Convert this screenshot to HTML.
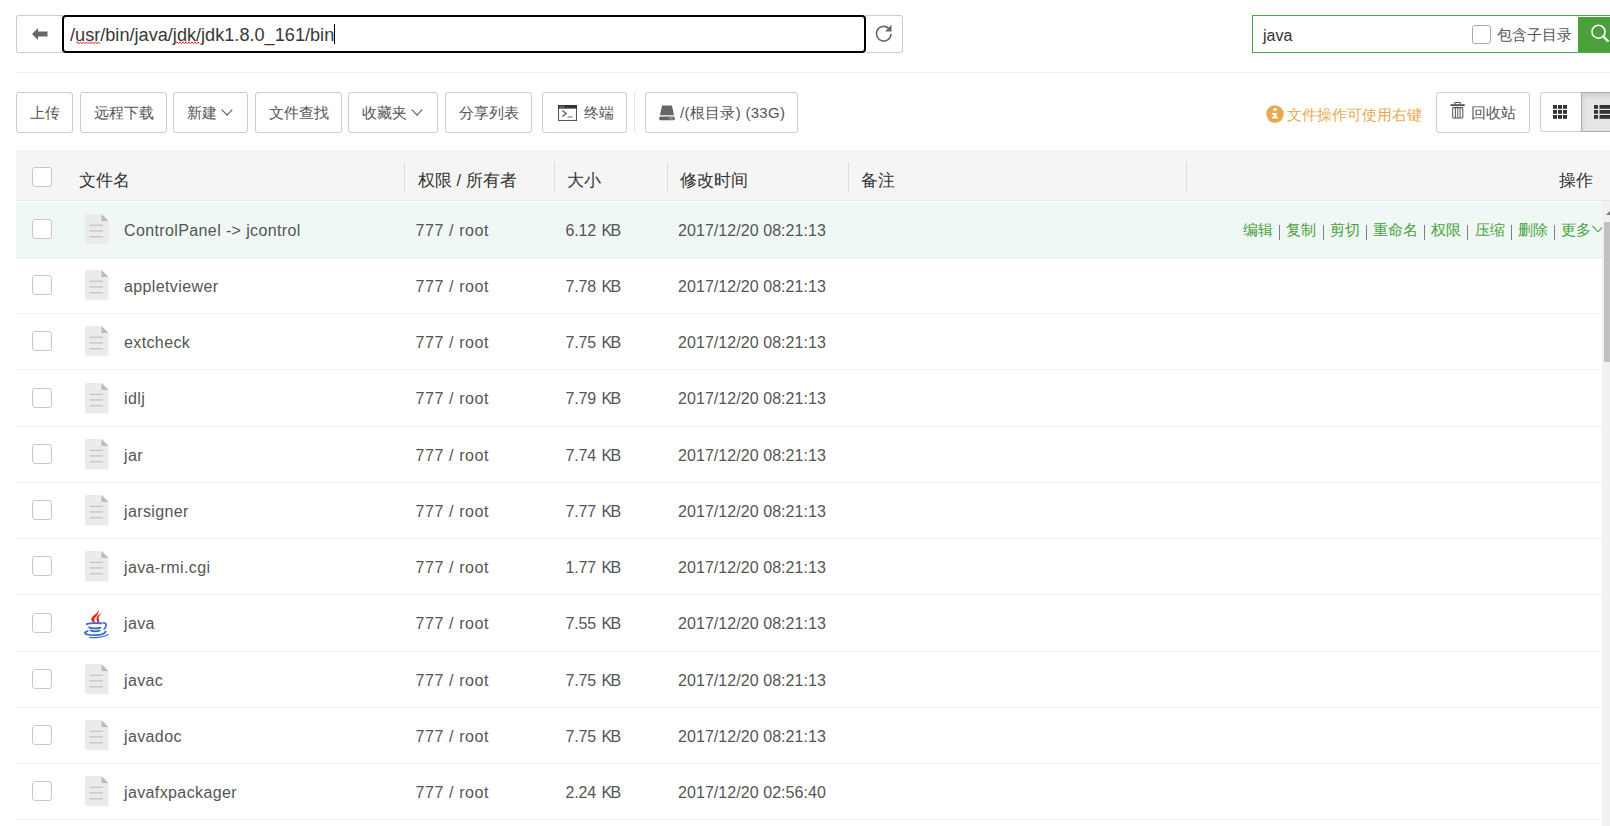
<!DOCTYPE html>
<html><head><meta charset="utf-8">
<style>
*{box-sizing:border-box;margin:0;padding:0}
html,body{width:1610px;height:826px;overflow:hidden;background:#fff}
body{position:relative;font-family:"Liberation Sans",sans-serif;color:#555}
.abs{position:absolute}
.btn{position:absolute;top:92px;height:41px;border:1px solid #ccc;border-radius:3px;background:#fff;font-size:15px;color:#555;line-height:39px;white-space:nowrap}
.btn span{position:absolute;top:0}
.chev{display:inline-block;width:8px;height:8px;border-right:1.7px solid #555;border-bottom:1.7px solid #555;transform:rotate(45deg)}
.hdr{position:absolute;top:150px;left:16px;width:1594px;height:51px;background:#f5f5f5;border-bottom:1px solid #e8e8e8}
.hdr .t{position:absolute;top:5px;line-height:50px;font-size:16.5px;color:#333;white-space:nowrap}
.hdr .sep{position:absolute;top:11.5px;width:1px;height:30px;background:#ddd}
.cb{position:absolute;width:20px;height:20px;border:1px solid #c8c8c8;border-radius:3px;background:#fff}
.row{position:absolute;left:16px;width:1586.5px;height:56.25px;border-bottom:1px solid #f0f0f0}
.row .t{position:absolute;top:1px;line-height:56px;font-size:16px;color:#555;white-space:nowrap}
.act{display:flex;align-items:center;height:56px;top:0!important;color:#4aa13c!important;font-size:15px!important}
.act span{display:block;line-height:20px;margin-top:1px}
.asep{display:block;width:1px;height:15px;background:#808080;margin:5px 6.15px 0 6.15px}
</style></head><body>

<!-- top bar -->
<div class="abs" style="left:16px;top:15px;width:47px;height:38px;border:1px solid #ccc;border-right:none;border-radius:3px 0 0 3px"></div>
<svg class="abs" style="left:32px;top:28px" width="16" height="12" viewBox="0 0 16 12"><path d="M0 6 L6 0 V3.5 H15.5 V8.5 H6 V12 Z" fill="#666"/></svg>
<div class="abs" style="left:62px;top:15px;width:804px;height:38px;border:2px solid #000;border-radius:4px;background:#fff"></div>
<div class="abs" style="left:70px;top:16px;line-height:38px;font-size:18.15px;color:#383838;white-space:nowrap">/usr/bin/java/jdk/jdk1.8.0_161/bin</div>
<div id="caret" class="abs" style="left:334px;top:24px;width:1px;height:20px;background:#000"></div>
<svg class="abs" style="left:75px;top:41.2px" width="130" height="4" viewBox="0 0 130 4"><path d="M1 2 L2.5 0.8 L4.0 2.8 L5.5 0.8 L7.0 2.8 L8.5 0.8 L10.0 2.8 L11.5 0.8 L13.0 2.8 L14.5 0.8 L16.0 2.8 L17.5 0.8 L19.0 2.8 L20.5 0.8 L22.0 2.8 L23.5 0.8 L25.0 2.8" fill="none" stroke="#e33" stroke-width="1"/><path d="M100.5 2 L102.0 0.8 L103.5 2.8 L105.0 0.8 L106.5 2.8 L108.0 0.8 L109.5 2.8 L111.0 0.8 L112.5 2.8 L114.0 0.8 L115.5 2.8 L117.0 0.8 L118.5 2.8 L120.0 0.8 L121.5 2.8 L123.0 0.8 L124.5 2.8" fill="none" stroke="#e33" stroke-width="1"/></svg>
<div class="abs" style="left:866px;top:15px;width:37px;height:38px;border:1px solid #ccc;border-left:none;border-radius:0 3px 3px 0"></div>
<svg class="abs" style="left:874px;top:23px" width="20" height="21" viewBox="0 0 20 21"><path d="M17 11 A7.3 7.3 0 1 1 14.6 5.3" fill="none" stroke="#666" stroke-width="1.6"/><path d="M17.5 1.8 V8.4 H11 Z" fill="#666"/></svg>

<div class="abs" style="left:1252px;top:15px;width:400px;height:38px;border:1px solid #4ca64c"></div>
<div class="abs" style="left:1263px;top:16.5px;line-height:38px;font-size:16px;color:#333">java</div>
<div class="cb" style="left:1472px;top:25px;width:19px;height:19px;border-color:#aaa"></div>
<div class="abs" style="left:1497px;top:16px;line-height:38px;font-size:15.2px;color:#555">包含子目录</div>
<div class="abs" style="left:1578px;top:17px;width:40px;height:35px;background:#4aa13c"></div>
<svg class="abs" style="left:1590px;top:23px" width="20" height="20" viewBox="0 0 20 20"><circle cx="8.5" cy="8.7" r="6.5" fill="none" stroke="#fff" stroke-width="1.6"/><path d="M13.2 13.4 L17.8 18" stroke="#fff" stroke-width="2.3" stroke-linecap="round"/></svg>

<div class="abs" style="left:16px;top:72px;width:1594px;height:1px;background:#eee"></div>

<!-- toolbar -->
<div class="btn" style="left:16px;width:57px"><span style="left:13px">上传</span></div>
<div class="btn" style="left:80px;width:87px"><span style="left:13px">远程下载</span></div>
<div class="btn" style="left:173px;width:75px"><span style="left:13px">新建</span><i class="chev abs" style="left:49px;top:12.5px"></i></div>
<div class="btn" style="left:255px;width:87px"><span style="left:13px">文件查找</span></div>
<div class="btn" style="left:348px;width:90px"><span style="left:13px">收藏夹</span><i class="chev abs" style="left:64px;top:12.5px"></i></div>
<div class="btn" style="left:445px;width:87px"><span style="left:13px">分享列表</span></div>
<div class="btn" style="left:542px;width:85px"><span style="left:41px">终端</span>
 <svg class="abs" style="left:15px;top:11.8px" width="19" height="16" viewBox="0 0 19 16"><rect x="0.5" y="0.5" width="18" height="15" fill="none" stroke="#555" stroke-width="1.1"/><rect x="0" y="0" width="19" height="3.6" fill="#333"/><rect x="1.6" y="1.3" width="1" height="1.1" fill="#bbb"/><rect x="3.4" y="1.3" width="1" height="1.1" fill="#bbb"/><rect x="5.2" y="1.3" width="1" height="1.1" fill="#bbb"/><path d="M4.3 5.6 L8.3 8.6 L4.3 11.6" fill="none" stroke="#555" stroke-width="1.2"/><rect x="9.5" y="11.3" width="5" height="1.3" fill="#888"/></svg></div>
<div class="abs" style="left:634px;top:92px;width:1px;height:40px;background:#e5e5e5"></div>
<div class="btn" style="left:645px;width:153px"><span style="left:34px;letter-spacing:0.3px">/(根目录) (33G)</span>
 <svg class="abs" style="left:13px;top:11.5px" width="17" height="16" viewBox="0 0 17 16"><path d="M3.1 0.5 H12.9 L15.1 10.2 H0.9 Z" fill="#666"/><rect x="0.1" y="11.5" width="15.8" height="3.8" rx="1.9" fill="#666"/><rect x="10.4" y="12.4" width="1.1" height="2" fill="#bbb"/><rect x="12.4" y="12.4" width="1.1" height="2" fill="#bbb"/></svg></div>

<svg class="abs" style="left:1265.5px;top:105px" width="18" height="18" viewBox="0 0 18 18"><circle cx="9" cy="9" r="8.7" fill="#e8a94c"/><g fill="#fff"><rect x="7.5" y="3" width="3" height="2.8"/><rect x="5.9" y="8" width="4.6" height="1.6"/><rect x="7.5" y="8" width="3" height="5"/><rect x="5.9" y="12" width="6.2" height="1.4"/></g></svg>
<div class="abs" style="left:1287px;top:92.7px;line-height:43px;font-size:15px;color:#e8a94c;white-space:nowrap">文件操作可使用右键</div>
<div class="btn" style="left:1436px;width:94px"><span style="left:34px">回收站</span>
 <svg class="abs" style="left:13.3px;top:9.1px" width="15" height="17" viewBox="0 0 15 17"><path d="M4.8 2.4 V1.3 Q4.8 0.5 5.6 0.5 H9.6 Q10.4 0.5 10.4 1.3 V2.4" fill="none" stroke="#555" stroke-width="1.1"/><rect x="0.5" y="2.2" width="14.2" height="1.9" fill="#555"/><rect x="2.7" y="5.6" width="10.1" height="10.4" rx="0.8" fill="none" stroke="#555" stroke-width="1.05"/><rect x="4.9" y="5.6" width="1" height="10.4" fill="#555"/><rect x="7.25" y="5.6" width="1" height="10.4" fill="#555"/><rect x="9.6" y="5.6" width="1" height="10.4" fill="#555"/></svg></div>
<div class="btn" style="left:1540px;width:42px;height:40px;border-radius:3px 0 0 3px">
 <svg class="abs" style="left:12.3px;top:12px" width="15" height="15" viewBox="0 0 15 15"><g fill="#333"><rect x="0" y="0" width="4" height="3.8"/><rect x="5" y="0" width="4" height="3.8"/><rect x="10" y="0" width="4" height="3.8"/><rect x="0" y="5" width="4" height="3.8"/><rect x="5" y="5" width="4" height="3.8"/><rect x="10" y="5" width="4" height="3.8"/><rect x="0" y="10" width="4" height="3.8"/><rect x="5" y="10" width="4" height="3.8"/><rect x="10" y="10" width="4" height="3.8"/></g></svg></div>
<div class="btn" style="left:1581px;width:60px;height:40px;border-radius:0;background:#e6e6e6;border-color:#adadad;box-shadow:inset 0 3px 5px rgba(0,0,0,.125)">
 <svg class="abs" style="left:12.3px;top:12px" width="20" height="15" viewBox="0 0 20 15"><g fill="#333"><rect x="0" y="0" width="4" height="3.8"/><rect x="5.5" y="0" width="14" height="3.8"/><rect x="0" y="5" width="4" height="3.8"/><rect x="5.5" y="5" width="14" height="3.8"/><rect x="0" y="10" width="4" height="3.8"/><rect x="5.5" y="10" width="14" height="3.8"/></g></svg></div>

<!-- table header -->
<div class="hdr">
 <div class="cb" style="left:16px;top:17px"></div>
 <div class="t" style="left:63px">文件名</div>
 <div class="sep" style="left:388px"></div>
 <div class="t" style="left:402px">权限 / 所有者</div>
 <div class="sep" style="left:538px"></div>
 <div class="t" style="left:551px">大小</div>
 <div class="sep" style="left:651px"></div>
 <div class="t" style="left:664px">修改时间</div>
 <div class="sep" style="left:832px"></div>
 <div class="t" style="left:845px">备注</div>
 <div class="sep" style="left:1170px"></div>
 <div class="t" style="left:1543px">操作</div>
</div>

<!--ROWS--><div class="row" style="top:201.65px;background:#eff8f5;border-bottom-color:#e0eeea;"><div class="cb" style="left:16px;top:17.25px"></div><svg class="abs" style="left:69px;top:12.35px" width="24" height="31" viewBox="0 0 24 31"><path d="M1.5 0 H16.5 L23.5 7 V28.8 Q23.5 30.3 22 30.3 H1.5 Q0 30.3 0 28.8 V1.5 Q0 0 1.5 0 Z" fill="#ebebeb"/><path d="M16.5 0 L23.5 7 H16.5 Z" fill="#bbb"/><rect x="4.5" y="10.6" width="13.6" height="1.5" fill="#c9c9c9"/><rect x="4.5" y="16.2" width="13.6" height="1.5" fill="#c9c9c9"/><rect x="4.5" y="22" width="13.6" height="1.5" fill="#c9c9c9"/></svg><div class="t" style="left:108px;letter-spacing:0.38px">ControlPanel -&gt; jcontrol</div><div class="t" style="left:399.5px;letter-spacing:0.6px">777 / root</div><div class="t" style="left:549.5px;letter-spacing:-0.15px;word-spacing:1.2px">6.12 <span style="letter-spacing:-1.6px">KB</span></div><div class="t" style="left:662px;letter-spacing:0.06px">2017/12/20 08:21:13</div><div class="t act" style="left:1227.2px"><span>编辑</span><i class="asep"></i><span>复制</span><i class="asep"></i><span>剪切</span><i class="asep"></i><span>重命名</span><i class="asep"></i><span>权限</span><i class="asep"></i><span>压缩</span><i class="asep"></i><span>删除</span><i class="asep"></i><span>更多</span><svg width="12" height="8" viewBox="0 0 12 8" style="margin-left:1px;margin-bottom:1px"><path d="M0.5 0.8 L6 6.8 L11.5 0.8" fill="none" stroke="#4aa13c" stroke-width="1.1"/></svg></div></div>
<div class="row" style="top:257.9px;"><div class="cb" style="left:16px;top:17.25px"></div><svg class="abs" style="left:69px;top:12.35px" width="24" height="31" viewBox="0 0 24 31"><path d="M1.5 0 H16.5 L23.5 7 V28.8 Q23.5 30.3 22 30.3 H1.5 Q0 30.3 0 28.8 V1.5 Q0 0 1.5 0 Z" fill="#ebebeb"/><path d="M16.5 0 L23.5 7 H16.5 Z" fill="#bbb"/><rect x="4.5" y="10.6" width="13.6" height="1.5" fill="#c9c9c9"/><rect x="4.5" y="16.2" width="13.6" height="1.5" fill="#c9c9c9"/><rect x="4.5" y="22" width="13.6" height="1.5" fill="#c9c9c9"/></svg><div class="t" style="left:108px;letter-spacing:0.38px">appletviewer</div><div class="t" style="left:399.5px;letter-spacing:0.6px">777 / root</div><div class="t" style="left:549.5px;letter-spacing:-0.15px;word-spacing:1.2px">7.78 <span style="letter-spacing:-1.6px">KB</span></div><div class="t" style="left:662px;letter-spacing:0.06px">2017/12/20 08:21:13</div></div>
<div class="row" style="top:314.15px;"><div class="cb" style="left:16px;top:17.25px"></div><svg class="abs" style="left:69px;top:12.35px" width="24" height="31" viewBox="0 0 24 31"><path d="M1.5 0 H16.5 L23.5 7 V28.8 Q23.5 30.3 22 30.3 H1.5 Q0 30.3 0 28.8 V1.5 Q0 0 1.5 0 Z" fill="#ebebeb"/><path d="M16.5 0 L23.5 7 H16.5 Z" fill="#bbb"/><rect x="4.5" y="10.6" width="13.6" height="1.5" fill="#c9c9c9"/><rect x="4.5" y="16.2" width="13.6" height="1.5" fill="#c9c9c9"/><rect x="4.5" y="22" width="13.6" height="1.5" fill="#c9c9c9"/></svg><div class="t" style="left:108px;letter-spacing:0.38px">extcheck</div><div class="t" style="left:399.5px;letter-spacing:0.6px">777 / root</div><div class="t" style="left:549.5px;letter-spacing:-0.15px;word-spacing:1.2px">7.75 <span style="letter-spacing:-1.6px">KB</span></div><div class="t" style="left:662px;letter-spacing:0.06px">2017/12/20 08:21:13</div></div>
<div class="row" style="top:370.4px;"><div class="cb" style="left:16px;top:17.25px"></div><svg class="abs" style="left:69px;top:12.35px" width="24" height="31" viewBox="0 0 24 31"><path d="M1.5 0 H16.5 L23.5 7 V28.8 Q23.5 30.3 22 30.3 H1.5 Q0 30.3 0 28.8 V1.5 Q0 0 1.5 0 Z" fill="#ebebeb"/><path d="M16.5 0 L23.5 7 H16.5 Z" fill="#bbb"/><rect x="4.5" y="10.6" width="13.6" height="1.5" fill="#c9c9c9"/><rect x="4.5" y="16.2" width="13.6" height="1.5" fill="#c9c9c9"/><rect x="4.5" y="22" width="13.6" height="1.5" fill="#c9c9c9"/></svg><div class="t" style="left:108px;letter-spacing:0.38px">idlj</div><div class="t" style="left:399.5px;letter-spacing:0.6px">777 / root</div><div class="t" style="left:549.5px;letter-spacing:-0.15px;word-spacing:1.2px">7.79 <span style="letter-spacing:-1.6px">KB</span></div><div class="t" style="left:662px;letter-spacing:0.06px">2017/12/20 08:21:13</div></div>
<div class="row" style="top:426.65px;"><div class="cb" style="left:16px;top:17.25px"></div><svg class="abs" style="left:69px;top:12.35px" width="24" height="31" viewBox="0 0 24 31"><path d="M1.5 0 H16.5 L23.5 7 V28.8 Q23.5 30.3 22 30.3 H1.5 Q0 30.3 0 28.8 V1.5 Q0 0 1.5 0 Z" fill="#ebebeb"/><path d="M16.5 0 L23.5 7 H16.5 Z" fill="#bbb"/><rect x="4.5" y="10.6" width="13.6" height="1.5" fill="#c9c9c9"/><rect x="4.5" y="16.2" width="13.6" height="1.5" fill="#c9c9c9"/><rect x="4.5" y="22" width="13.6" height="1.5" fill="#c9c9c9"/></svg><div class="t" style="left:108px;letter-spacing:0.38px">jar</div><div class="t" style="left:399.5px;letter-spacing:0.6px">777 / root</div><div class="t" style="left:549.5px;letter-spacing:-0.15px;word-spacing:1.2px">7.74 <span style="letter-spacing:-1.6px">KB</span></div><div class="t" style="left:662px;letter-spacing:0.06px">2017/12/20 08:21:13</div></div>
<div class="row" style="top:482.9px;"><div class="cb" style="left:16px;top:17.25px"></div><svg class="abs" style="left:69px;top:12.35px" width="24" height="31" viewBox="0 0 24 31"><path d="M1.5 0 H16.5 L23.5 7 V28.8 Q23.5 30.3 22 30.3 H1.5 Q0 30.3 0 28.8 V1.5 Q0 0 1.5 0 Z" fill="#ebebeb"/><path d="M16.5 0 L23.5 7 H16.5 Z" fill="#bbb"/><rect x="4.5" y="10.6" width="13.6" height="1.5" fill="#c9c9c9"/><rect x="4.5" y="16.2" width="13.6" height="1.5" fill="#c9c9c9"/><rect x="4.5" y="22" width="13.6" height="1.5" fill="#c9c9c9"/></svg><div class="t" style="left:108px;letter-spacing:0.38px">jarsigner</div><div class="t" style="left:399.5px;letter-spacing:0.6px">777 / root</div><div class="t" style="left:549.5px;letter-spacing:-0.15px;word-spacing:1.2px">7.77 <span style="letter-spacing:-1.6px">KB</span></div><div class="t" style="left:662px;letter-spacing:0.06px">2017/12/20 08:21:13</div></div>
<div class="row" style="top:539.15px;"><div class="cb" style="left:16px;top:17.25px"></div><svg class="abs" style="left:69px;top:12.35px" width="24" height="31" viewBox="0 0 24 31"><path d="M1.5 0 H16.5 L23.5 7 V28.8 Q23.5 30.3 22 30.3 H1.5 Q0 30.3 0 28.8 V1.5 Q0 0 1.5 0 Z" fill="#ebebeb"/><path d="M16.5 0 L23.5 7 H16.5 Z" fill="#bbb"/><rect x="4.5" y="10.6" width="13.6" height="1.5" fill="#c9c9c9"/><rect x="4.5" y="16.2" width="13.6" height="1.5" fill="#c9c9c9"/><rect x="4.5" y="22" width="13.6" height="1.5" fill="#c9c9c9"/></svg><div class="t" style="left:108px;letter-spacing:0.38px">java-rmi.cgi</div><div class="t" style="left:399.5px;letter-spacing:0.6px">777 / root</div><div class="t" style="left:549.5px;letter-spacing:-0.15px;word-spacing:1.2px">1.77 <span style="letter-spacing:-1.6px">KB</span></div><div class="t" style="left:662px;letter-spacing:0.06px">2017/12/20 08:21:13</div></div>
<div class="row" style="top:595.4px;"><div class="cb" style="left:16px;top:17.25px"></div><svg class="abs" style="left:68px;top:13.1px" width="26" height="31" viewBox="0 0 26 31"><g fill="#e4231b"><path d="M14.6 0.3 C15.8 3.5 11.5 6 8.3 9 C6 11.5 7.5 13.8 12.3 16 C10 13.5 9.6 12 11 10 C12.6 7.8 15.8 5 14.6 0.3 Z"/><path d="M18.6 4.8 C15.5 6 12.6 8 12.4 10.5 C12.3 12.5 14 13.6 13.4 16 C15.6 14.6 15.6 12.8 14.9 11.5 C14.1 10 15 7 18.6 4.8 Z"/></g><g fill="none" stroke="#3b6bc6" stroke-linecap="round"><path d="M2.7 16.2 C6 14.6 13.5 15.2 17.4 15.3" stroke-width="1.9"/><path d="M19.4 14.8 C22.6 15 23.4 17.8 20.2 20.8" stroke-width="1.7"/><path d="M5.1 19.4 C8 20.8 13.5 20.8 16.5 19.6" stroke-width="1.8"/><path d="M6.5 22.4 C9 23.4 13 23.4 15.7 22.6" stroke-width="1.7"/><path d="M3.6 23.2 C-1 24.6 0.6 26.9 9 27.1 C15 27.3 20.6 26.1 21.6 23.6" stroke-width="1.9"/><path d="M5.6 29.4 C12 29.9 20 29.1 24.3 26.6" stroke-width="1.2"/></g></svg><div class="t" style="left:108px;letter-spacing:0.38px">java</div><div class="t" style="left:399.5px;letter-spacing:0.6px">777 / root</div><div class="t" style="left:549.5px;letter-spacing:-0.15px;word-spacing:1.2px">7.55 <span style="letter-spacing:-1.6px">KB</span></div><div class="t" style="left:662px;letter-spacing:0.06px">2017/12/20 08:21:13</div></div>
<div class="row" style="top:651.65px;"><div class="cb" style="left:16px;top:17.25px"></div><svg class="abs" style="left:69px;top:12.35px" width="24" height="31" viewBox="0 0 24 31"><path d="M1.5 0 H16.5 L23.5 7 V28.8 Q23.5 30.3 22 30.3 H1.5 Q0 30.3 0 28.8 V1.5 Q0 0 1.5 0 Z" fill="#ebebeb"/><path d="M16.5 0 L23.5 7 H16.5 Z" fill="#bbb"/><rect x="4.5" y="10.6" width="13.6" height="1.5" fill="#c9c9c9"/><rect x="4.5" y="16.2" width="13.6" height="1.5" fill="#c9c9c9"/><rect x="4.5" y="22" width="13.6" height="1.5" fill="#c9c9c9"/></svg><div class="t" style="left:108px;letter-spacing:0.38px">javac</div><div class="t" style="left:399.5px;letter-spacing:0.6px">777 / root</div><div class="t" style="left:549.5px;letter-spacing:-0.15px;word-spacing:1.2px">7.75 <span style="letter-spacing:-1.6px">KB</span></div><div class="t" style="left:662px;letter-spacing:0.06px">2017/12/20 08:21:13</div></div>
<div class="row" style="top:707.9px;"><div class="cb" style="left:16px;top:17.25px"></div><svg class="abs" style="left:69px;top:12.35px" width="24" height="31" viewBox="0 0 24 31"><path d="M1.5 0 H16.5 L23.5 7 V28.8 Q23.5 30.3 22 30.3 H1.5 Q0 30.3 0 28.8 V1.5 Q0 0 1.5 0 Z" fill="#ebebeb"/><path d="M16.5 0 L23.5 7 H16.5 Z" fill="#bbb"/><rect x="4.5" y="10.6" width="13.6" height="1.5" fill="#c9c9c9"/><rect x="4.5" y="16.2" width="13.6" height="1.5" fill="#c9c9c9"/><rect x="4.5" y="22" width="13.6" height="1.5" fill="#c9c9c9"/></svg><div class="t" style="left:108px;letter-spacing:0.38px">javadoc</div><div class="t" style="left:399.5px;letter-spacing:0.6px">777 / root</div><div class="t" style="left:549.5px;letter-spacing:-0.15px;word-spacing:1.2px">7.75 <span style="letter-spacing:-1.6px">KB</span></div><div class="t" style="left:662px;letter-spacing:0.06px">2017/12/20 08:21:13</div></div>
<div class="row" style="top:764.15px;"><div class="cb" style="left:16px;top:17.25px"></div><svg class="abs" style="left:69px;top:12.35px" width="24" height="31" viewBox="0 0 24 31"><path d="M1.5 0 H16.5 L23.5 7 V28.8 Q23.5 30.3 22 30.3 H1.5 Q0 30.3 0 28.8 V1.5 Q0 0 1.5 0 Z" fill="#ebebeb"/><path d="M16.5 0 L23.5 7 H16.5 Z" fill="#bbb"/><rect x="4.5" y="10.6" width="13.6" height="1.5" fill="#c9c9c9"/><rect x="4.5" y="16.2" width="13.6" height="1.5" fill="#c9c9c9"/><rect x="4.5" y="22" width="13.6" height="1.5" fill="#c9c9c9"/></svg><div class="t" style="left:108px;letter-spacing:0.38px">javafxpackager</div><div class="t" style="left:399.5px;letter-spacing:0.6px">777 / root</div><div class="t" style="left:549.5px;letter-spacing:-0.15px;word-spacing:1.2px">2.24 <span style="letter-spacing:-1.6px">KB</span></div><div class="t" style="left:662px;letter-spacing:0.06px">2017/12/20 02:56:40</div></div>
<div class="row" style="top:820.4px;"><div class="cb" style="left:16px;top:17.25px"></div><svg class="abs" style="left:69px;top:12.35px" width="24" height="31" viewBox="0 0 24 31"><path d="M1.5 0 H16.5 L23.5 7 V28.8 Q23.5 30.3 22 30.3 H1.5 Q0 30.3 0 28.8 V1.5 Q0 0 1.5 0 Z" fill="#ebebeb"/><path d="M16.5 0 L23.5 7 H16.5 Z" fill="#bbb"/><rect x="4.5" y="10.6" width="13.6" height="1.5" fill="#c9c9c9"/><rect x="4.5" y="16.2" width="13.6" height="1.5" fill="#c9c9c9"/><rect x="4.5" y="22" width="13.6" height="1.5" fill="#c9c9c9"/></svg><div class="t" style="left:108px;letter-spacing:0.38px">javah</div><div class="t" style="left:399.5px;letter-spacing:0.6px">777 / root</div><div class="t" style="left:549.5px;letter-spacing:-0.15px;word-spacing:1.2px">7.75 <span style="letter-spacing:-1.6px">KB</span></div><div class="t" style="left:662px;letter-spacing:0.06px">2017/12/20 08:21:13</div></div><!--/ROWS-->

<!-- scrollbar -->
<div class="abs" style="left:1602px;top:201px;width:8px;height:625px;background:#f1f1f1"></div>
<div class="abs" style="left:1604px;top:222px;width:6px;height:140px;background:#c1c1c1"></div>
<svg class="abs" style="left:1606px;top:211px" width="4" height="5" viewBox="0 0 4 5"><path d="M0 4 L4 0 V4 Z" fill="#777"/></svg>

</body></html>
